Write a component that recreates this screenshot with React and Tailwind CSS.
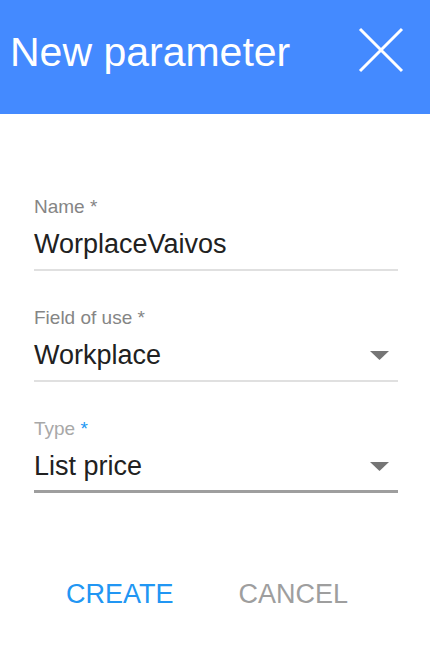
import React from 'react'

const font = { fontFamily: '"Liberation Sans", Arial, sans-serif' }

function Caret() {
  return (
    <svg width="19" height="9" viewBox="0 0 19 9" className="shrink-0">
      <path d="M0 0 L19 0 L9.5 9 Z" fill="#757575" />
    </svg>
  )
}

function Field({ label, value, select, active }) {
  return (
    <div className="flex flex-col">
      <div className={`text-[19px] leading-[22px] ${active ? 'text-[#a8a8a8]' : 'text-[#858585]'}`}>
        {label} <span className={active ? 'text-[#2196f3]' : ''}>*</span>
      </div>
      <div className="flex items-center justify-between h-[44px] pt-[8px] pr-[9px]">
        <span className="text-[27px] text-[#212121] leading-[30px]">{value}</span>
        {select && <Caret />}
      </div>
      <div className={active ? 'h-[3px] bg-[#9e9e9e] mt-[6px]' : 'h-[2px] bg-[#e0e0e0] mt-[7px]'} />
    </div>
  )
}

export default function App() {
  return (
    <div className="w-[430px] h-[650px] bg-white flex flex-col" style={font}>
      <div className="h-[114px] bg-[#448aff] flex items-start justify-between pl-[10px] pr-[26px] pt-[27px] shrink-0">
        <h1 className="text-white text-[41px] leading-none mt-[5px]">New parameter</h1>
        <svg width="46" height="46" viewBox="0 0 46 46">
          <path d="M2 2 L44 44 M44 2 L2 44" stroke="white" strokeWidth="3" />
        </svg>
      </div>

      <div className="flex flex-col gap-[36px] pl-[34px] pr-[32px] pt-[82px]">
        <Field label="Name" value="WorplaceVaivos" />
        <Field label="Field of use" value="Workplace" select />
        <Field label="Type" value="List price" select active />
      </div>

      <div className="flex pl-[66px] gap-[65px] pt-[86px]">
        <button className="text-[27px] text-[#2196f3] leading-[30px]">CREATE</button>
        <button className="text-[27px] text-[#9e9e9e] leading-[30px]">CANCEL</button>
      </div>
    </div>
  )
}
